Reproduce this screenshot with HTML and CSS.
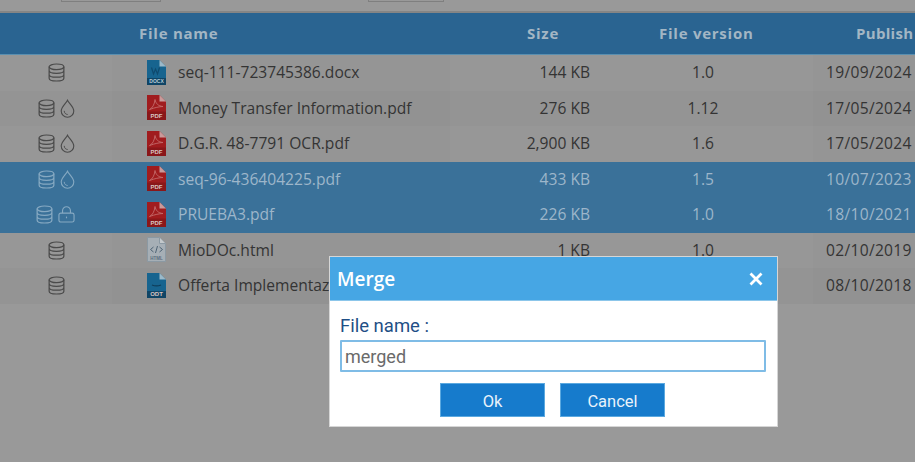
FILE: index.html
```html
<!DOCTYPE html>
<html lang="en">
<head>
<meta charset="utf-8">
<title>Merge</title>
<link rel="stylesheet" href="styles.css">
</head>
<body>
<svg class="defs" width="0" height="0" aria-hidden="true">
  <symbol id="db" viewBox="0 0 18 20">
    <ellipse cx="9" cy="4" rx="7.800" ry="3" fill="none" stroke="currentColor" stroke-width="1.300"/>
    <path d="M1.200 4v12c0 1.700 3.500 3 7.800 3s7.800-1.300 7.800-3V4M1.200 8c0 1.700 3.500 3 7.800 3s7.800-1.300 7.800-3M1.200 12c0 1.700 3.500 3 7.800 3s7.800-1.300 7.800-3" fill="none" stroke="currentColor" stroke-width="1.300"/>
  </symbol>
  <symbol id="drop" viewBox="0 0 16 20">
    <path d="M8 1.200C6.500 4.500 1.300 8.500 1.300 12.600a6.700 6.700 0 0 0 13.400 0C14.700 8.500 9.500 4.500 8 1.200Z" fill="none" stroke="currentColor" stroke-width="1.200"/>
    <path d="M4.500 12.500c0 2.200 1.600 3.800 3.700 3.900" fill="none" stroke="currentColor" stroke-width="1"/>
  </symbol>
  <symbol id="lock" viewBox="0 0 18 18">
    <rect x="1" y="7.500" width="16" height="9.500" rx="2" fill="none" stroke="currentColor" stroke-width="1.200"/>
    <path d="M4.800 7.500V5a4.200 4.200 0 0 1 8.400 0v2.500" fill="none" stroke="currentColor" stroke-width="1.200"/>
    <path d="M9 11.200v1.800" stroke="currentColor" stroke-width="1.200"/>
  </symbol>
  <symbol id="page-pdf" viewBox="0 0 19 25">
    <path d="M0 0h12.500L19 6.500V25H0Z" fill="#a01c1e"/>
    <path d="M0 16.500h19V25H0Z" fill="#8a1719"/>
    <path d="M12.500 0 19 6.500h-6.500Z" fill="#c99a9a"/>
    <path d="M2.500 14.500c3-1.500 5-5 5.500-10 .8 4 3 6.500 8 7-4 .2-8 1-13.500 3Z" fill="none" stroke="#c46b6b" stroke-width=".9"/>
    <text x="9.500" y="22.800" text-anchor="middle" class="ft">PDF</text>
  </symbol>
  <symbol id="page-docx" viewBox="0 0 19 25">
    <path d="M0 0h12.500L19 6.500V25H0Z" fill="#17648f"/>
    <path d="M0 18h19v7H0Z" fill="#0f4566"/>
    <path d="M12.500 0 19 6.500h-6.500Z" fill="#9cb9c9"/>
    <path d="M4.500 7.500 6.500 14l2-5 2 5 2-6.500" fill="none" stroke="#0f4a6e" stroke-width="1.200"/>
    <text x="9.500" y="23.300" text-anchor="middle" class="ft ft-small">DOCX</text>
  </symbol>
  <symbol id="page-odt" viewBox="0 0 19 25">
    <path d="M0 0h12.500L19 6.500V25H0Z" fill="#17648f"/>
    <path d="M0 18h19v7H0Z" fill="#0f4566"/>
    <path d="M12.500 0 19 6.500h-6.500Z" fill="#9cb9c9"/>
    <path d="M5 12c3 1.300 6 1.300 9 0" fill="none" stroke="#0f3d5a" stroke-width="1.200"/>
    <text x="9.500" y="23.300" text-anchor="middle" class="ft">ODT</text>
  </symbol>
  <symbol id="page-html" viewBox="0 0 19 25">
    <path d="M.5.500h12L18.500 6.500v18H.5Z" fill="#a6afb6" stroke="#8b99a3"/>
    <path d="M12.500 .500v6h6" fill="#c4c9cc" stroke="#8b99a3"/>
    <path d="M6.500 10 3.500 12.500 6.500 15M12.500 10l3 2.500-3 2.500M10.500 9 8.500 16" fill="none" stroke="#4f6475" stroke-width="1"/>
    <text x="9.500" y="22.500" text-anchor="middle" class="ft ft-html">HTML</text>
  </symbol>
</svg>

<div class="toolbar">
  <span class="stub stub-a"></span>
  <span class="stub stub-b"></span>
</div>

<div class="grid">
  <div class="row head">
    <div class="c-icons"></div>
    <div class="c-name">File name</div>
    <div class="c-size">Size</div>
    <div class="c-ver">File version</div>
    <div class="c-date">Publish date</div>
  </div>
  <div class="row">
    <div class="c-icons"><svg class="i-db"><use href="#db"/></svg></div>
    <div class="c-name"><svg class="i-file"><use href="#page-docx"/></svg><span>seq-111-723745386.docx</span></div>
    <div class="c-size">144 KB</div><div class="c-ver">1.0</div><div class="c-date">19/09/2024</div>
  </div>
  <div class="row alt">
    <div class="c-icons"><svg class="i-db"><use href="#db"/></svg><svg class="i-drop"><use href="#drop"/></svg></div>
    <div class="c-name"><svg class="i-file"><use href="#page-pdf"/></svg><span>Money Transfer Information.pdf</span></div>
    <div class="c-size">276 KB</div><div class="c-ver">1.12</div><div class="c-date">17/05/2024</div>
  </div>
  <div class="row">
    <div class="c-icons"><svg class="i-db"><use href="#db"/></svg><svg class="i-drop"><use href="#drop"/></svg></div>
    <div class="c-name"><svg class="i-file"><use href="#page-pdf"/></svg><span>D.G.R. 48-7791 OCR.pdf</span></div>
    <div class="c-size">2,900 KB</div><div class="c-ver">1.6</div><div class="c-date">17/05/2024</div>
  </div>
  <div class="row sel">
    <div class="c-icons"><svg class="i-db"><use href="#db"/></svg><svg class="i-drop"><use href="#drop"/></svg></div>
    <div class="c-name"><svg class="i-file"><use href="#page-pdf"/></svg><span>seq-96-436404225.pdf</span></div>
    <div class="c-size">433 KB</div><div class="c-ver">1.5</div><div class="c-date">10/07/2023</div>
  </div>
  <div class="row sel">
    <div class="c-icons c-lock"><svg class="i-db"><use href="#db"/></svg><svg class="i-lock"><use href="#lock"/></svg></div>
    <div class="c-name"><svg class="i-file"><use href="#page-pdf"/></svg><span>PRUEBA3.pdf</span></div>
    <div class="c-size">226 KB</div><div class="c-ver">1.0</div><div class="c-date">18/10/2021</div>
  </div>
  <div class="row">
    <div class="c-icons"><svg class="i-db"><use href="#db"/></svg></div>
    <div class="c-name"><svg class="i-file"><use href="#page-html"/></svg><span>MioDOc.html</span></div>
    <div class="c-size">1 KB</div><div class="c-ver">1.0</div><div class="c-date">02/10/2019</div>
  </div>
  <div class="row alt">
    <div class="c-icons"><svg class="i-db"><use href="#db"/></svg></div>
    <div class="c-name"><svg class="i-file"><use href="#page-odt"/></svg><span>Offerta Implementazione.odt</span></div>
    <div class="c-size">88 KB</div><div class="c-ver">1.0</div><div class="c-date">08/10/2018</div>
  </div>
</div>

<div class="dialog">
  <div class="dialog-head">
    <span class="dialog-title">Merge</span>
    <svg class="close" viewBox="0 0 14 14"><path d="M1.500 1.500l11 11M12.500 1.500l-11 11" stroke="#fff" stroke-width="2.800" fill="none"/></svg>
  </div>
  <div class="dialog-body">
    <label class="field-label" for="fname">File name :</label>
    <input class="field" id="fname" value="merged">
    <div class="actions">
      <button class="btn">Ok</button>
      <button class="btn">Cancel</button>
    </div>
  </div>
</div>
</body>
</html>
```
FILE: styles.css
```css
* { box-sizing: border-box; }
html, body { margin: 0; height: 100%; }
body {
  width: 915px;
  height: 462px;
  overflow: hidden;
  background: #999;
  font-family: "Open Sans", "Noto Sans", sans-serif;
  color: #343434;
  position: relative;
}
.defs { position: absolute; }
.ft { font: 700 6px "Liberation Sans", sans-serif; fill: #d8c4c4; }
.ft-small { font-size: 5px; fill: #b8ccd8; }
.ft-html { fill: #5a6e7e; font-size: 4.500px; }

.toolbar {
  height: 13px;
  border-bottom: 2px solid #858585;
  display: flex;
  align-items: flex-start;
}
.stub { height: 2px; border: 1px solid #7f7f7f; border-top: 0; }
.stub-a { width: 100px; margin-left: 61px; }
.stub-b { width: 76px; margin-left: 207px; }

.grid { width: 915px; overflow: hidden; }
.row {
  display: grid;
  grid-template-columns: 112px 338px 145px 218px 120px;
  width: 933px;
  height: 35.500px;
  font-size: 15.600px;
  background: #979797;
}
.row > div { display: flex; align-items: center; min-width: 0; white-space: nowrap; padding-bottom: 1px; }
.row.alt { background: #949494; }
.row .c-name, .row .c-date { background: rgba(0,0,0,.012); }
.head {
  height: 42px;
  background: #2a6491;
  color: #a3b6c4;
  font-weight: 700;
  font-size: 15px;
  letter-spacing: .75px;
  border-bottom: 1px solid #5a8fb0;
}
.row.head > div { padding-bottom: 2px; }
.row.head .c-name, .row.head .c-date { background: none; }
.row.head .c-name { padding-left: 27px; }
.row.head .c-date { padding-left: 43px; }
.row.head .c-size { justify-content: flex-end; padding-right: 36px; }
.row.head .c-ver { padding-left: 64px; justify-content: flex-start; }
.row.sel { background: #3a7199; color: #9db6ca; }
.row.sel .c-name, .row.sel .c-date { background: none; }
.row.sel .c-icons { color: #86a9c2; }

.c-icons { justify-content: center; gap: 5px; color: #4a4a4a; }
.row > .c-icons { padding-bottom: 0; }
.c-name { padding-left: 35px; }
.c-name span { margin-left: 12px; }
.c-size { justify-content: flex-end; padding-right: 5px; }
.c-ver { justify-content: center; }
.c-date { padding-left: 13px; letter-spacing: .3px; }
.row:not(.head) .c-ver { padding-right: 2px; }
.i-db { width: 17px; height: 19px; }
.i-drop { width: 15px; height: 19px; }
.i-lock { width: 17px; height: 17px; }
.c-lock { padding-right: 1px; }
.i-file { width: 19px; height: 25px; flex: none; }

.dialog {
  position: absolute;
  left: 329px;
  top: 256px;
  width: 449px;
  height: 171px;
  background: #fff;
  border: 1px solid #d6d6d6;
  font-family: Roboto, "Noto Sans", sans-serif;
}
.dialog-head {
  height: 44px;
  background: #46a6e4;
  border-bottom: 1px solid #8cc6ea;
  display: flex;
  align-items: center;
  justify-content: space-between;
  padding: 0 14px 0 7px;
}
.dialog-title { color: #fff; font: 600 19px "Open Sans", sans-serif; }
.close { width: 14px; height: 14px; }
.dialog-body { padding: 15px 11px 0 10px; display: flex; flex-direction: column; }
.field-label { color: #1f4f86; font-size: 18.500px; line-height: 20px; }
.field {
  margin-top: 4px;
  height: 32px;
  border: 2px solid #7fbce6;
  padding: 0 3px;
  font: 400 18px Roboto, sans-serif;
  color: #6a6a6a;
  outline: none;
  border-radius: 1px;
}
.actions { display: flex; justify-content: center; gap: 15px; margin-top: 11px; padding-right: 1px; }
.btn {
  width: 105px;
  height: 34px;
  background: #167bcc;
  border: 1px solid #5ba9e0;
  color: #e8f2fa;
  font: 400 16.500px Roboto, sans-serif;
  padding: 2px 0 0;
}
```
